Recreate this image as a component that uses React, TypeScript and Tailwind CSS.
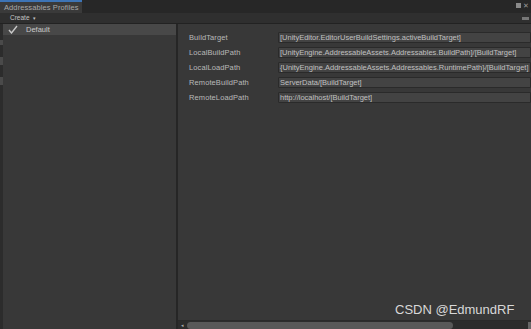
import React from "react";

const ROWS = [
  { label: "BuildTarget", value: "[UnityEditor.EditorUserBuildSettings.activeBuildTarget]" },
  { label: "LocalBuildPath", value: "[UnityEngine.AddressableAssets.Addressables.BuildPath]/[BuildTarget]" },
  { label: "LocalLoadPath", value: "{UnityEngine.AddressableAssets.Addressables.RuntimePath}/[BuildTarget]" },
  { label: "RemoteBuildPath", value: "ServerData/[BuildTarget]" },
  { label: "RemoteLoadPath", value: "http://localhost/[BuildTarget]" },
];

function Check() {
  return (
    <svg width="10" height="9" viewBox="0 0 10 9" className="shrink-0">
      <path d="M1 5 L3.5 8 L9 1" fill="none" stroke="#c8c8c8" strokeWidth="1.4" />
    </svg>
  );
}

export default function App() {
  return (
    <div
      className="relative flex h-[329px] w-[531px] flex-col overflow-hidden bg-[#383838] text-[7.5px] leading-none text-[#b8b8b8]"
      style={{ fontFamily: '"Liberation Sans", Arial, sans-serif' }}
    >
      {/* tab bar */}
      <div className="flex h-[13px] shrink-0 items-end bg-[#272727]">
        <div className="flex h-[13px] w-[82px] items-center whitespace-nowrap border-t-2 border-[#3d74b6] bg-[#3a3a3a] pl-[4px] text-[7.5px] tracking-[0.1px] text-[#a8a8a8]">
          Addressables Profiles
        </div>
        <div className="flex-1" />
        <div className="mr-[2px] flex h-full flex-col items-end pt-[2px]">
          <div className="flex items-center gap-[2px]">
            <div className="h-[5px] w-[5px] bg-[#8a8a8a]" />
            <span className="text-[7px] text-[#9a9a9a]">✕</span>
          </div>
        </div>
      </div>

      {/* toolbar */}
      <div className="flex h-[11px] shrink-0 items-center border-b border-[#222] bg-[#2f2f2f] pl-[10px] text-[6.5px] text-[#c4c4c4]">
        Create <span className="ml-[3px] text-[5px]">▾</span>
        <div className="flex-1" />
        <div className="mr-[2px] h-[3px] w-[7px] bg-[#777]" />
      </div>

      <div className="flex min-h-0 flex-1">
        {/* left edge strip */}
        <div className="flex w-[3px] flex-col gap-[12px] bg-[#2c2c2c] pt-[16px]">
          <div className="h-[5px] bg-[#4a4a4a]" />
          <div className="h-[8px] bg-[#4a4a4a]" />
          <div className="h-[8px] bg-[#4a4a4a]" />
        </div>

        {/* profiles list */}
        <div className="flex w-[175px] flex-col border-r-2 border-[#262626]">
          <div className="flex h-[11px] items-center gap-[8px] bg-[#484848] pl-[5px] text-[#c8c8c8]">
            <Check />
            <span>Default</span>
          </div>
        </div>

        {/* variables */}
        <div className="flex min-w-0 flex-1 flex-col">
          <div className="flex flex-1 flex-col gap-[4px] pl-[11px] pt-[8px]">
            {ROWS.map((r) => (
              <div key={r.label} className="flex h-[11px] items-center">
                <div className="w-[89px] shrink-0 tracking-[0.1px]">{r.label}</div>
                <div className="flex h-[11px] min-w-0 flex-1 items-center overflow-hidden whitespace-nowrap rounded-l-[1px] border border-[#2a2a2a] bg-[#434343] pl-[1px] text-[#c0c0c0]">
                  {r.value}
                </div>
              </div>
            ))}
          </div>

          {/* horizontal scrollbar */}
          <div className="flex h-[9px] shrink-0 items-center border-t border-[#2a2a2a] bg-[#2c2c2c]">
            <div className="flex h-full w-[9px] items-center justify-center text-[5px] text-[#aaa]">◂</div>
            <div className="h-[7px] w-[266px] rounded-full bg-[#585858]" />
            <div className="flex-1" />
            <div className="h-[7px] w-[3px] bg-[#666]" />
          </div>
        </div>
      </div>

      <div className="absolute left-[395px] top-[303px] text-[13px] text-[#d8d8d8]">
        CSDN @EdmundRF
      </div>
    </div>
  );
}
